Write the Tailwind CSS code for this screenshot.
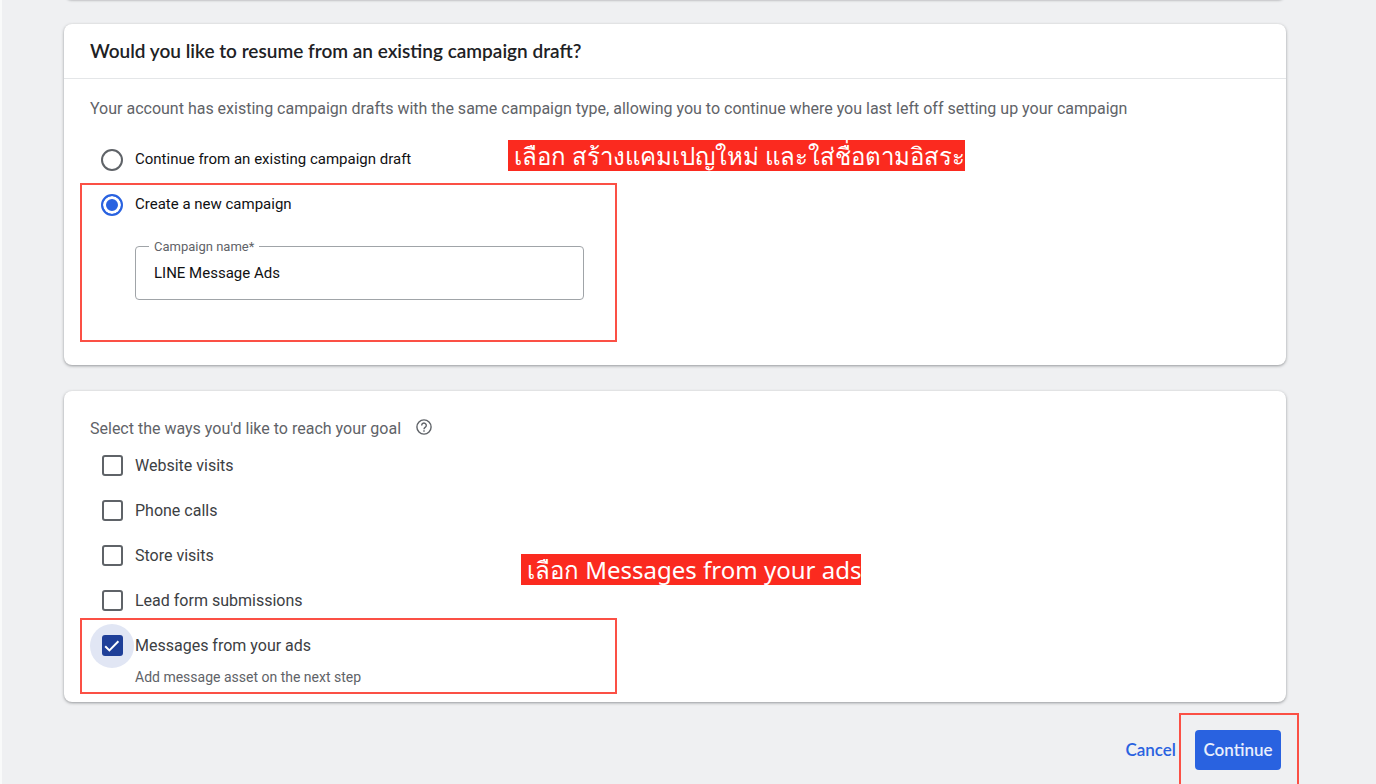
<!DOCTYPE html>
<html lang="en">
<head>
<meta charset="utf-8">
<meta name="viewport" content="width=device-width, initial-scale=1">
<title>Campaign setup</title>
<script src="https://cdn.jsdelivr.net/npm/@tailwindcss/browser@4"></script>
</head>
<body class="bg-[#eff0f2] font-['Roboto','Noto_Sans',sans-serif] text-[#3c4043]">
<main class="relative min-h-screen overflow-hidden border-l-2 border-[#f9fafa] pr-[90px] pl-[62px]">
  <div class="-mt-4 h-4 rounded-lg bg-white shadow-[0_1px_2px_rgba(60,64,67,0.25)]"></div>

  <section class="relative mt-6 rounded-lg bg-white pb-[65px] shadow-[0_1px_3px_rgba(60,64,67,0.5)]">
    <h2 class="border-b border-[#e4e6e8] px-[26px] py-4 font-['Lato','Noto_Sans',sans-serif] text-[19px] leading-[22px] font-semibold text-[#202124]">Would you like to resume from an existing campaign draft?</h2>
    <div class="px-[26px] pt-5">
      <p class="text-[16px] leading-5 text-[#5f6368]">Your account has existing campaign drafts with the same campaign type, allowing you to continue where you last left off setting up your campaign</p>
      <div class="mt-[18px] pl-[11px]">
        <label class="flex h-[45px] items-center gap-3 text-[15px] text-[#101113]">
          <input type="radio" name="mode" class="size-[22px] appearance-none rounded-full border-2 border-[#5f6368]">
          Continue from an existing campaign draft
        </label>
        <label class="flex h-[45px] items-center gap-3 text-[15px] text-[#101113]">
          <input type="radio" name="mode" checked class="size-[22px] appearance-none rounded-full border-2 border-[#2962e0] bg-[#2962e0] shadow-[inset_0_0_0_3px_white]">
          Create a new campaign
        </label>
        <div class="relative mt-[19px] ml-[34px] w-[449px]">
          <label for="name" class="absolute -top-2 left-3.5 bg-white px-[5px] text-[13px] leading-[18px] text-[#5f6368]">Campaign name*</label>
          <input id="name" type="text" value="LINE Message Ads" class="block h-[54px] w-full rounded border border-[#a0a4a8] px-[18px] text-[15px] text-[#101113]">
        </div>
      </div>
    </div>
    <div class="pointer-events-none absolute top-[159px] left-4 h-[159px] w-[537px] border-2 border-[#fb5045]"></div>
    <p lang="th" class="absolute top-[116px] left-[444px] bg-[#fb2a1f] pl-1.5 font-['Noto_Sans',sans-serif] text-[24px] leading-[31px] whitespace-nowrap text-white">เลือก สร้างแคมเปญใหม่ และใส่ชื่อตามอิสระ</p>
  </section>

  <section class="relative mt-[26px] rounded-lg bg-white px-[26px] pt-7 pb-4 shadow-[0_1px_3px_rgba(60,64,67,0.5)]">
    <div class="flex items-start gap-[15px] text-[16px] leading-5 text-[#5f6368]">
      <p>Select the ways you'd like to reach your goal</p>
      <button type="button" aria-label="Help">
        <svg class="size-4" viewBox="0 0 16 16" fill="none" stroke="#5f6368" stroke-width="1.4">
          <circle cx="8" cy="8" r="7.1"/>
          <path d="M5.7 6.4a2.3 2.3 0 1 1 3.7 1.8C8.500 8.800 8 9.200 8 10.200M8 11.200v1.500"/>
        </svg>
      </button>
    </div>
    <div class="mt-1 pl-[11px] text-[16px]">
      <label class="flex h-[45px] items-center gap-3"><span class="flex size-[22px] items-center justify-center"><input type="checkbox" class="size-[21px] appearance-none rounded-[3px] border-2 border-[#5f6368]"></span>Website visits</label>
      <label class="flex h-[45px] items-center gap-3"><span class="flex size-[22px] items-center justify-center"><input type="checkbox" class="size-[21px] appearance-none rounded-[3px] border-2 border-[#5f6368]"></span>Phone calls</label>
      <label class="flex h-[45px] items-center gap-3"><span class="flex size-[22px] items-center justify-center"><input type="checkbox" class="size-[21px] appearance-none rounded-[3px] border-2 border-[#5f6368]"></span>Store visits</label>
      <label class="flex h-[45px] items-center gap-3"><span class="flex size-[22px] items-center justify-center"><input type="checkbox" class="size-[21px] appearance-none rounded-[3px] border-2 border-[#5f6368]"></span>Lead form submissions</label>
      <label class="flex h-[45px] items-center gap-3">
        <span class="relative flex size-[22px] items-center justify-center">
          <span class="absolute -inset-[11px] rounded-full bg-[#e1e6f4]"></span>
          <input type="checkbox" checked class="relative size-[21px] appearance-none rounded-[3px] bg-[#1f3f98]">
          <svg class="pointer-events-none absolute inset-0" viewBox="0 0 22 22" fill="none" stroke="white" stroke-width="2"><path d="M4.200 11.200l4.200 4.200 9-9.200"/></svg>
        </span>Messages from your ads</label>
      <p class="pl-[34px] text-[14px] leading-[18px] text-[#5f6368]">Add message asset on the next step</p>
    </div>
    <div class="pointer-events-none absolute top-[227px] left-4 h-[76px] w-[537px] border-2 border-[#fb5045]"></div>
    <p lang="th" class="absolute top-[163px] left-[457px] bg-[#fb2a1f] pl-1.5 font-['Noto_Sans',sans-serif] text-[24px] leading-[31px] whitespace-nowrap text-white">เลือก Messages from your ads</p>
  </section>

  <div class="mt-7 flex items-center justify-end gap-[19px] pr-[5px] font-['Lato','Noto_Sans',sans-serif] text-[17px] font-semibold">
    <button type="button" class="text-[#2962e0]">Cancel</button>
    <div class="relative">
      <button type="button" class="h-10 w-[86px] rounded bg-[#2962e0] text-[#e9effc]">Continue</button>
      <div class="pointer-events-none absolute -top-[17px] -right-[18px] -left-4 h-24 border-2 border-[#fb5045]"></div>
    </div>
  </div>
</main>
</body>
</html>
